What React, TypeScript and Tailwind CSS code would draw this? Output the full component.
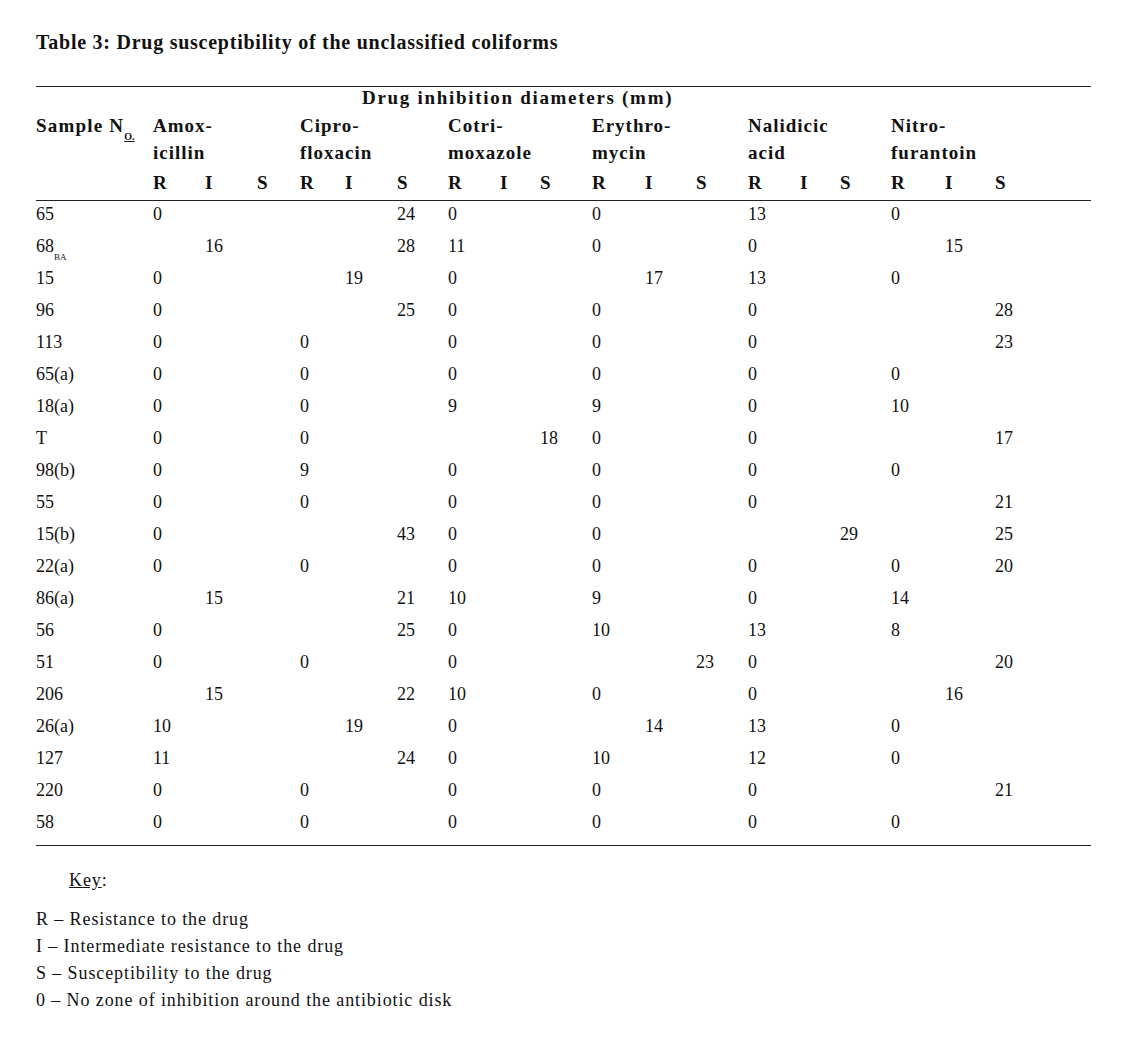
const cols =
  "grid grid-cols-[117px_52px_52px_43px_45px_52px_51px_52px_40px_52px_53px_51px_52px_52px_40px_51px_54px_50px_1fr]"

type Row = { id: React.ReactNode; v: (string | number | null)[] }

const n = null
const rows: Row[] = [
  { id: "65", v: [0, n, n, n, n, 24, 0, n, n, 0, n, n, 13, n, n, 0, n, n] },
  {
    id: (
      <>
        68<sub className="text-[9px] align-[-6px]">BA</sub>
      </>
    ),
    v: [n, 16, n, n, n, 28, 11, n, n, 0, n, n, 0, n, n, n, 15, n],
  },
  { id: "15", v: [0, n, n, n, 19, n, 0, n, n, n, 17, n, 13, n, n, 0, n, n] },
  { id: "96", v: [0, n, n, n, n, 25, 0, n, n, 0, n, n, 0, n, n, n, n, 28] },
  { id: "113", v: [0, n, n, 0, n, n, 0, n, n, 0, n, n, 0, n, n, n, n, 23] },
  { id: "65(a)", v: [0, n, n, 0, n, n, 0, n, n, 0, n, n, 0, n, n, 0, n, n] },
  { id: "18(a)", v: [0, n, n, 0, n, n, 9, n, n, 9, n, n, 0, n, n, 10, n, n] },
  { id: "T", v: [0, n, n, 0, n, n, n, n, 18, 0, n, n, 0, n, n, n, n, 17] },
  { id: "98(b)", v: [0, n, n, 9, n, n, 0, n, n, 0, n, n, 0, n, n, 0, n, n] },
  { id: "55", v: [0, n, n, 0, n, n, 0, n, n, 0, n, n, 0, n, n, n, n, 21] },
  { id: "15(b)", v: [0, n, n, n, n, 43, 0, n, n, 0, n, n, n, n, 29, n, n, 25] },
  { id: "22(a)", v: [0, n, n, 0, n, n, 0, n, n, 0, n, n, 0, n, n, 0, n, 20] },
  { id: "86(a)", v: [n, 15, n, n, n, 21, 10, n, n, 9, n, n, 0, n, n, 14, n, n] },
  { id: "56", v: [0, n, n, n, n, 25, 0, n, n, 10, n, n, 13, n, n, 8, n, n] },
  { id: "51", v: [0, n, n, 0, n, n, 0, n, n, n, n, 23, 0, n, n, n, n, 20] },
  { id: "206", v: [n, 15, n, n, n, 22, 10, n, n, 0, n, n, 0, n, n, n, 16, n] },
  { id: "26(a)", v: [10, n, n, n, 19, n, 0, n, n, n, 14, n, 13, n, n, 0, n, n] },
  { id: "127", v: [11, n, n, n, n, 24, 0, n, n, 10, n, n, 12, n, n, 0, n, n] },
  { id: "220", v: [0, n, n, 0, n, n, 0, n, n, 0, n, n, 0, n, n, n, n, 21] },
  { id: "58", v: [0, n, n, 0, n, n, 0, n, n, 0, n, n, 0, n, n, 0, n, n] },
]

const drugs = [
  ["Amox-", "icillin"],
  ["Cipro-", "floxacin"],
  ["Cotri-", "moxazole"],
  ["Erythro-", "mycin"],
  ["Nalidicic", "acid"],
  ["Nitro-", "furantoin"],
]

export default function App() {
  return (
    <div className="min-h-[1040px] bg-white px-[36px] pt-[30px] text-[#111] font-['Liberation_Serif',serif]">
      {/* Title */}
      <h1 className="text-[20px] font-bold leading-[24px] tracking-[0.75px]">
        Table 3: Drug susceptibility of the unclassified coliforms
      </h1>

      <div className="mt-[32px] w-[1055px] border-t border-[#222] border-b">
        {/* Header */}
        <div className="border-b border-[#222] pb-[4px] font-bold text-[19px]">
          <div className="h-[22px] pl-[326px] leading-[22px] tracking-[1.7px]">
            Drug inhibition diameters (mm)
          </div>
          <div className={cols + " mt-[3px] leading-[27px]"}>
            <div className="tracking-[1.2px] whitespace-nowrap">
              Sample N
              <sub className="text-[10px] tracking-normal underline align-[-5px]">O.</sub>
            </div>
            {drugs.map((d, i) => (
              <div key={i} className="col-span-3 tracking-[1px]">
                <div>{d[0]}</div>
                <div>{d[1]}</div>
              </div>
            ))}
          </div>
          <div className={cols + " mt-[3px] leading-[27px]"}>
            <div />
            {drugs.map((_, i) =>
              ["R", "I", "S"].map((l) => <div key={i + l}>{l}</div>)
            )}
          </div>
        </div>

        {/* Body */}
        <div className="pb-[4px] text-[18px]">
          {rows.map((r, i) => (
            <div key={i} className={cols + " h-[32px] leading-[26px]"}>
              <div>{r.id}</div>
              {r.v.map((c, j) => (
                <div key={j}>{c === null ? "" : c}</div>
              ))}
            </div>
          ))}
        </div>
      </div>

      {/* Key */}
      <div className="text-[18px] tracking-[0.9px]">
        <div className="pl-[33px] pt-[22px] leading-[24px]">
          <span className="underline">Key</span>:
        </div>
        <div className="mt-[14px] leading-[27px]">
          <div>R – Resistance to the drug</div>
          <div>I – Intermediate resistance to the drug</div>
          <div>S – Susceptibility to the drug</div>
          <div>0 – No zone of inhibition around the antibiotic disk</div>
        </div>
      </div>
    </div>
  )
}
